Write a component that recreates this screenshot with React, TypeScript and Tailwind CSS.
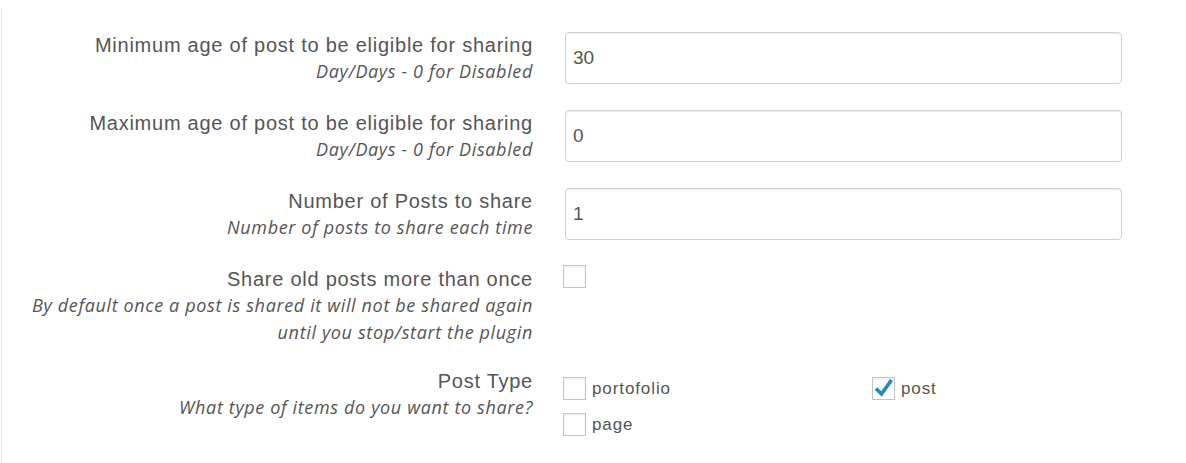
import React from "react";

const mainCls =
  "text-[20px] leading-[26px] tracking-[0.75px] text-[#555] font-['Liberation_Sans',Arial,sans-serif]";
const subCls =
  "text-[18px] leading-[27px] tracking-[0.64px] italic text-[#555] font-['Open_Sans',sans-serif]";

function Box({ checked = false }: { checked?: boolean }) {
  return (
    <span className="relative inline-block w-[23px] h-[23px] border border-[#c4c4c4] bg-white shadow-[inset_0_1px_2px_rgba(0,0,0,0.08)] shrink-0">
      {checked && (
        <svg
          viewBox="0 0 23 23"
          className="absolute left-[-1px] top-[-1px] w-[23px] h-[23px] overflow-visible"
        >
          <path
            d="M4 11.5 L9.5 17 L19.5 3"
            fill="none"
            stroke="#1e8cbe"
            strokeWidth="3.6"
            strokeLinecap="butt"
            strokeLinejoin="miter"
          />
        </svg>
      )}
    </span>
  );
}

function TextRow({
  label,
  sub,
  value,
}: {
  label: string;
  sub: string;
  value: string;
}) {
  return (
    <div className="flex items-start">
      <div className="w-[531px] text-right">
        <div className={mainCls}>{label}</div>
        <div className={subCls}>{sub}</div>
      </div>
      <div className="ml-[32px] w-[557px]">
        <div className="h-[52px] w-full rounded-[4px] border border-[#d0d0d0] bg-white shadow-[inset_0_1px_1px_rgba(0,0,0,0.075)] flex items-center px-[7px] text-[19px] text-[#555] font-['Liberation_Sans',Arial,sans-serif]">
          {value}
        </div>
      </div>
    </div>
  );
}

export default function App() {
  return (
    <div className="w-[1186px] h-[463px] bg-white pt-[8px] overflow-hidden">
      <div className="ml-[1px] h-full border-l border-[#e6e6e6] pt-[24px] flex flex-col">
        <div className="flex flex-col gap-[25px]">
          <TextRow
            label="Minimum age of post to be eligible for sharing"
            sub="Day/Days - 0 for Disabled"
            value="30"
          />
          <TextRow
            label="Maximum age of post to be eligible for sharing"
            sub="Day/Days - 0 for Disabled"
            value="0"
          />
          <TextRow
            label="Number of Posts to share"
            sub="Number of posts to share each time"
            value="1"
          />
          <div className="flex items-start">
            <div className="w-[531px] text-right">
              <div className={mainCls}>Share old posts more than once</div>
              <div className={subCls}>
                By default once a post is shared it will not be shared again
              </div>
              <div className={subCls}>until you stop/start the plugin</div>
            </div>
            <div className="ml-[30px] mt-[-1px]">
              <Box />
            </div>
          </div>
        </div>
        <div className="flex items-start mt-[22px]">
          <div className="w-[531px] text-right">
            <div className={mainCls}>Post Type</div>
            <div className={subCls}>What type of items do you want to share?</div>
          </div>
          <div className="ml-[30px] pt-[9px] grid grid-cols-[309px_200px] gap-y-[13px] text-[17px] tracking-[0.9px] text-[#555] font-['Liberation_Sans',Arial,sans-serif]">
            <label className="flex items-center gap-[6px] leading-[23px]">
              <Box />
              <span>portofolio</span>
            </label>
            <label className="flex items-center gap-[6px] leading-[23px]">
              <Box checked />
              <span>post</span>
            </label>
            <label className="flex items-center gap-[6px] leading-[23px]">
              <Box />
              <span>page</span>
            </label>
          </div>
        </div>
      </div>
    </div>
  );
}
